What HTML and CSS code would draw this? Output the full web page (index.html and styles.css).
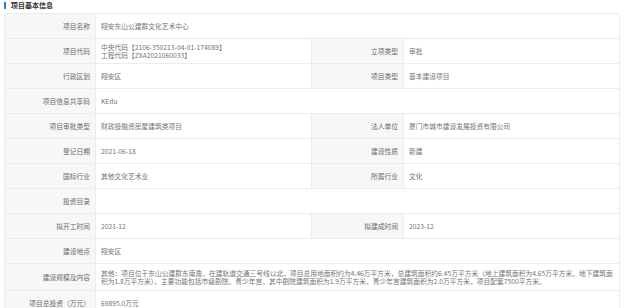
FILE: index.html
```html
<!DOCTYPE html>
<html lang="zh-CN">
<head>
<meta charset="utf-8">
<title>项目基本信息</title>
<link rel="stylesheet" href="styles.css">
</head>
<body>
<div class="page">
  <div class="title"><span class="bar"></span><span class="title-text">项目基本信息</span></div>
  <div class="info">
    <div class="lbl">项目名称</div>
    <div class="val span3">翔安东山公建群文化艺术中心</div>

    <div class="lbl">项目代码</div>
    <div class="val"><div class="lines">中央代码【2106-350213-04-01-174089】<br>工程代码【ZXA2021060033】</div></div>
    <div class="lbl">立项类型</div>
    <div class="val">审批</div>

    <div class="lbl">行政区划</div>
    <div class="val">翔安区</div>
    <div class="lbl">项目类型</div>
    <div class="val">基本建设项目</div>

    <div class="lbl">项目信息共享码</div>
    <div class="val span3">KEdu</div>

    <div class="lbl">项目审批类型</div>
    <div class="val">财政投融资房屋建筑类项目</div>
    <div class="lbl">法人单位</div>
    <div class="val">厦门市城市建设发展投资有限公司</div>

    <div class="lbl">登记日期</div>
    <div class="val">2021-06-18</div>
    <div class="lbl">建设性质</div>
    <div class="val">新建</div>

    <div class="lbl">国标行业</div>
    <div class="val">其他文化艺术业</div>
    <div class="lbl">所属行业</div>
    <div class="val">文化</div>

    <div class="lbl">投资目录</div>
    <div class="val span3"></div>

    <div class="lbl">拟开工时间</div>
    <div class="val">2021-12</div>
    <div class="lbl">拟建成时间</div>
    <div class="val">2023-12</div>

    <div class="lbl">建设地点</div>
    <div class="val span3">翔安区</div>

    <div class="lbl">建设规模及内容</div>
    <div class="val span3 long"><div class="lines">其他：项目位于东山公建群东南角，在建轨道交通三号线以北，项目总用地面积约为4.46万平方米，总建筑面积约6.45万平方米（地上建筑面积为4.65万平方米，地下建筑面积为1.8万平方米）。主要功能包括市级剧院、青少年宫，其中剧院建筑面积为1.9万平方米，青少年宫建筑面积为2.0万平方米，项目配套7500平方米。</div></div>

    <div class="lbl">项目总投资（万元）</div>
    <div class="val span3">69895.0万元</div>
  </div>
</div>
</body>
</html>
```

FILE: styles.css
```css
html, body {
  margin: 0;
  padding: 0;
  background: #ffffff;
}

body {
  font-family: "Noto Sans CJK SC", "Noto Sans", sans-serif;
  font-size: 6.75px;
  color: #707070;
}

.page {
  padding: 0 6px 0 4px;
}

.title {
  display: flex;
  align-items: center;
  height: 13px;
  gap: 5px;
}

.bar {
  width: 2px;
  height: 7px;
  background: #1f7fe0;
  margin-top: -2px;
}

.title-text {
  font-size: 7px;
  font-weight: 700;
  color: #333333;
  margin-top: -3px;
}

.info {
  display: grid;
  grid-template-columns: 91px 216px 92px 216px;
  border-top: 1px solid #ececec;
  border-left: 1px solid #ececec;
}

.lbl, .val {
  box-sizing: border-box;
  min-height: 25px;
  border-right: 1px solid #ececec;
  border-bottom: 1px solid #ececec;
  display: flex;
  align-items: center;
  line-height: 8px;
  white-space: nowrap;
}

.lbl {
  background: #f7f7f7;
  justify-content: flex-end;
  padding-right: 5px;
  color: #6a6a6a;
}

.val {
  padding-left: 5px;
  padding-right: 5px;
  color: #747474;
}

.val.span3 {
  grid-column: span 3;
}

.lines {
  line-height: 8.5px;
}

.val.long {
  white-space: normal;
  padding-top: 5px;
  padding-bottom: 5px;
  padding-right: 6px;
  min-height: 27px;
}

.val.long .lines {
  line-height: 8px;
}
```
